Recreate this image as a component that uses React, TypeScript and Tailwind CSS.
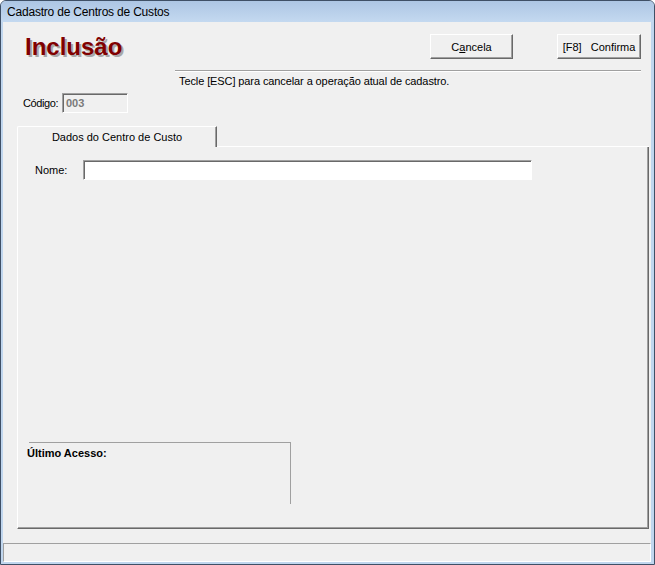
import React from 'react'

const sunken =
  'border border-t-[#a0a0a0] border-l-[#a0a0a0] border-r-white border-b-white shadow-[inset_1px_1px_0_#696969]'
const raised =
  'border border-t-white border-l-white border-r-[#696969] border-b-[#696969] shadow-[inset_-1px_-1px_0_#a0a0a0]'

function Button({ width, children }: { width: string; children: React.ReactNode }) {
  return (
    <button
      className={`${width} h-[25px] ${raised} bg-[#f0f0f0] text-[11px] leading-[14px] text-black flex items-center justify-center whitespace-pre`}
    >
      {children}
    </button>
  )
}

export default function App() {
  return (
    <div className="w-[655px] h-[565px] border border-[#3f5066] rounded-t-[6px] bg-[#c0d6ee] flex flex-col overflow-hidden font-['Liberation_Sans',Arial,sans-serif] text-black">
      {/* title bar */}
      <div className="h-[21px] pl-[6px] flex items-center bg-linear-to-b from-[#adc6e4] to-[#c4d9f0] text-[12px] tracking-[-0.2px]">
        Cadastro de Centros de Custos
      </div>

      <div className="flex-1 pl-[2px] pr-[3px] pb-[2px] flex">
        <div className="w-[648px] h-[540px] bg-[#f0f0f0] flex flex-col">
          {/* header */}
          <div className="flex h-[91px]">
            <div className="w-[172px] pl-[20px] pt-[13px] flex flex-col">
              <div className="ml-[2px] text-[24px] leading-[24px] font-bold text-[#800000] [text-shadow:2px_2px_0_#a8a8a8]">
                Inclusão
              </div>
              <div className="mt-[34px] flex items-center h-[20px]">
                <span className="w-[39px] whitespace-nowrap text-[11px] leading-[14px] tracking-[-0.4px]">Código:</span>
                <div
                  className={`w-[66px] h-[20px] ${sunken} bg-[#f0f0f0] flex items-center pl-[3px] text-[11px] font-bold text-[#7a7a7a]`}
                >
                  003
                </div>
              </div>
            </div>
            <div className="flex-1 pr-[10px] pt-[12px] flex flex-col">
              <div className="flex justify-end gap-[44px]">
                <Button width="w-[83px]">
                  C<span className="underline">a</span>ncela
                </Button>
                <Button width="w-[84px]">{'[F8]   Confirma'}</Button>
              </div>
              <div className="mt-[11px] border-t border-t-[#a0a0a0] border-b border-b-white" />
              <div className="mt-[2px] pl-[4px] text-[11px] leading-[14px] tracking-[-0.1px]">
                Tecle [ESC] para cancelar a operação atual de cadastro.
              </div>
            </div>
          </div>

          {/* tabs */}
          <div className="mt-[13px] ml-[14px] mr-[2px] flex flex-col">
            <div className="flex h-[21px]">
              <div className="w-[200px] border-t border-l border-white border-r border-r-[#696969] rounded-tl-[2px] shadow-[inset_-1px_0_0_#a0a0a0] flex items-center justify-center text-[11px] leading-[14px]">
                Dados do Centro de Custo
              </div>
              <div className="flex-1 border-b border-white" />
            </div>
            <div className="h-[382px] border-l border-l-white border-r border-b border-r-[#696969] border-b-[#696969] shadow-[inset_-1px_-1px_0_#a0a0a0] flex flex-col">
              <div className="mt-[13px] pl-[17px] flex items-center h-[20px]">
                <span className="w-[48px] text-[11px] leading-[14px]">Nome:</span>
                <div className={`w-[449px] h-[20px] ${sunken} bg-white`} />
              </div>
              <div className="flex-1" />
              <div className="mb-[24px] ml-[11px] w-[262px] h-[62px] border-t border-r border-[#a0a0a0] pt-[3px]">
                <div className="-ml-[2px] text-[11px] leading-[14px] font-bold">Último Acesso:</div>
              </div>
            </div>
          </div>

          {/* status bar */}
          <div className="mt-[14px] h-[19px] border border-t-[#a0a0a0] border-l-[#a0a0a0] border-r-white border-b-white" />
        </div>
      </div>
    </div>
  )
}
